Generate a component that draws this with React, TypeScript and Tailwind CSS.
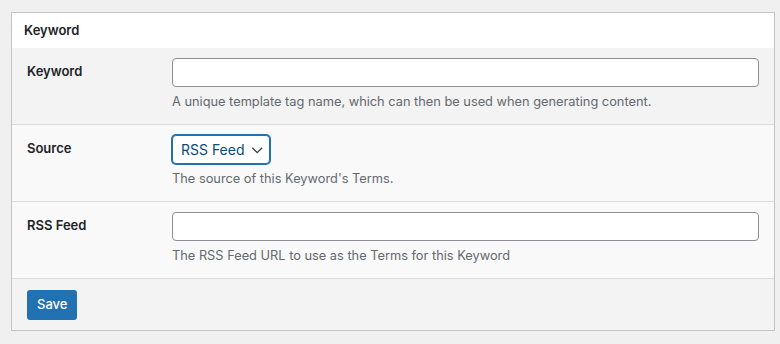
const rows = [
  {
    label: "Keyword",
    kind: "input",
    help: "A unique template tag name, which can then be used when generating content.",
    bg: "bg-[#f3f3f3]",
  },
  {
    label: "Source",
    kind: "select",
    help: "The source of this Keyword's Terms.",
    bg: "bg-[#f9f9f9]",
  },
  {
    label: "RSS Feed",
    kind: "input",
    help: "The RSS Feed URL to use as the Terms for this Keyword",
    bg: "bg-[#f9f9f9]",
  },
];

export default function App() {
  return (
    <div className="h-[344px] w-[780px] bg-[#f0f0f1] pl-[11px] pr-[5px] pt-[12px] font-['Inter',Arial,sans-serif] text-[13px] text-[#1d2327]">
      <div className="flex flex-col border border-[#c3c4c7] bg-white">
        <div className="flex h-[35px] items-center px-3">
          <h2 className="text-[13px] font-semibold">Keyword</h2>
        </div>

        {rows.map((row) => (
          <div key={row.label} className={`flex h-[77px] border-b border-[#dcdcde] ${row.bg}`}>
            <div className="w-[160px] shrink-0 pl-[15px] pt-[14px] font-semibold">{row.label}</div>
            <div className="flex flex-1 flex-col pr-[15px] pt-[10px]">
              {row.kind === "input" ? (
                <input className="h-[29px] w-full rounded-[4px] border border-[#8c8f94] bg-white px-2 outline-none" />
              ) : (
                <button className="flex h-[29px] w-[98px] items-center gap-[6px] whitespace-nowrap rounded-[4px] border border-[#2271b1] bg-white pl-[8px] pr-[6px] text-[14px] text-[#0a4b78] shadow-[0_0_0_1px_#2271b1]">
                  <span>RSS Feed</span>
                  <svg width="14" height="14" viewBox="0 0 14 14" fill="none" stroke="#3c434a" strokeWidth="1.5">
                    <path d="M1.5 4.5l5.5 5.5 5.5-5.5" />
                  </svg>
                </button>
              )}
              <p className="mt-[5px] text-[12.8px] text-[#646970]">{row.help}</p>
            </div>
          </div>
        ))}

        <div className="flex h-[51px] items-center bg-[#f3f3f3] px-[15px]">
          <button className="h-[30px] rounded-[3px] bg-[#2271b1] px-[10px] text-[13px] font-medium text-white">Save</button>
        </div>
      </div>
    </div>
  );
}
